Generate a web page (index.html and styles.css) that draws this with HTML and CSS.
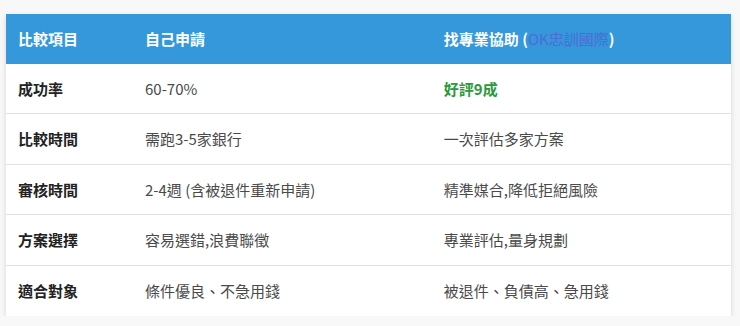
FILE: index.html
```html
<!DOCTYPE html>
<html lang="zh-Hant">
<head>
<meta charset="utf-8">
<link rel="stylesheet" href="styles.css">
</head>
<body>
<div class="wrap">
<table class="cmp">
  <colgroup><col class="c1"><col class="c2"><col class="c3"></colgroup>
  <thead>
    <tr><th>比較項目</th><th>自己申請</th><th>找專業協助 (<a class="lnk" href="#">OK忠訓國際</a>)</th></tr>
  </thead>
  <tbody>
    <tr><td class="k">成功率</td><td>60-70%</td><td class="good">好評9成</td></tr>
    <tr><td class="k">比較時間</td><td>需跑3-5家銀行</td><td>一次評估多家方案</td></tr>
    <tr><td class="k">審核時間</td><td>2-4週 (含被退件重新申請)</td><td>精準媒合,降低拒絕風險</td></tr>
    <tr><td class="k">方案選擇</td><td>容易選錯,浪費聯徵</td><td>專業評估,量身規劃</td></tr>
    <tr><td class="k">適合對象</td><td>條件優良、不急用錢</td><td>被退件、負債高、急用錢</td></tr>
  </tbody>
</table>
</div>
</body>
</html>
```
FILE: styles.css
```css
html, body { margin: 0; padding: 0; background: #f8f8f8; }
body { font-family: "Noto Sans CJK TC", "Noto Sans", sans-serif; font-size: 15px; line-height: 21.6px; color: #4a4a4a; }
.wrap { padding: 14px 9px 0 6px; }
.cmp { width: 100%; border-collapse: collapse; background: #fff; box-shadow: 0 2px 5px rgba(0,0,0,0.14); }
.c1 { width: 127px; }
.cmp th { background: #3498db; color: #fff; font-weight: 700; text-align: left; padding: 14px 12px; }
.cmp td { padding: 14px 12px; border-bottom: 1px solid #e2e2e2; }
.cmp tbody tr:last-child td { border-bottom: none; }
.cmp td.k { font-weight: 700; color: #222; }
.cmp td.good { color: #2a9a3a; font-weight: 700; }
.lnk { color: #4f6bd6; text-decoration: none; font-weight: 400; }
```
